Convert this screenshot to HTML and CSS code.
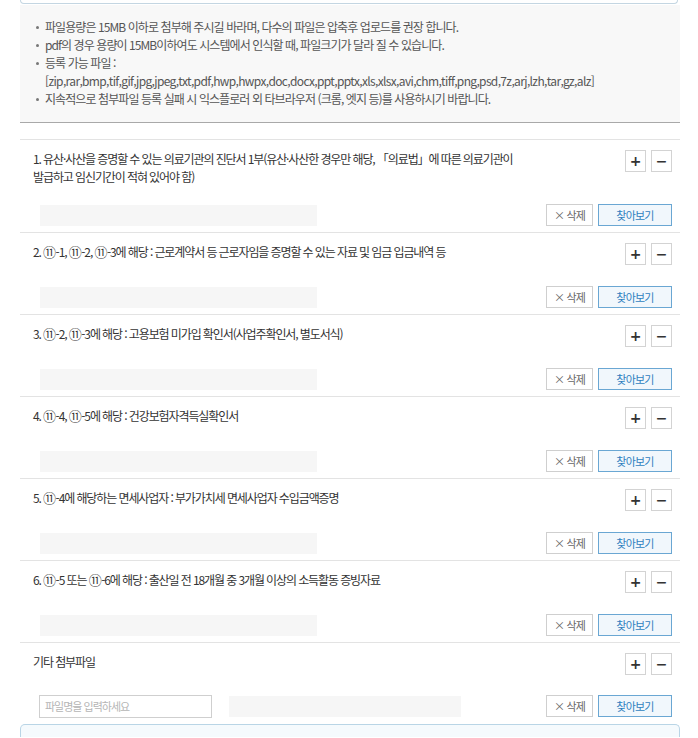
FILE: index.html
```html
<!DOCTYPE html>
<html lang="ko">
  <head>
    <meta charset="UTF-8" />
    <meta name="viewport" content="width=device-width, initial-scale=1.0" />
    <title>첨부파일</title>
    <link rel="stylesheet" href="styles.css">
  </head>
  <body>
    <div class="wrap">
      <div class="top-box"></div>

      <div class="notice">
        <ul>
          <li>파일용량은 15MB 이하로 첨부해 주시길 바라며, 다수의 파일은 압축후 업로드를 권장 합니다.</li>
          <li>pdf의 경우 용량이 15MB이하여도 시스템에서 인식할 때, 파일크기가 달라 질 수 있습니다.</li>
          <li>등록 가능 파일 :<br><span class="ext">[zip,rar,bmp,tif,gif,jpg,jpeg,txt,pdf,hwp,hwpx,doc,docx,ppt,pptx,xls,xlsx,avi,chm,tiff,png,psd,7z,arj,lzh,tar,gz,alz]</span></li>
          <li>지속적으로 첨부파일 등록 실패 시 익스플로러 외 타브라우저 (크롬, 엣지 등)를 사용하시기 바랍니다.</li>
        </ul>
      </div>

      <div class="file-list">
        <div class="file-row">
          <div class="row-head">
            <p class="row-title">1. 유산·사산을 증명할 수 있는 의료기관의 진단서 1부(유산·사산한 경우만 해당, 「의료법」에 따른 의료기관이<br>발급하고 임신기간이 적혀 있어야 함)</p>
            <div class="pm">
              <button type="button" class="pm-btn">+</button>
              <button type="button" class="pm-btn">−</button>
            </div>
          </div>
          <div class="row-file">
            <div class="file-bar"></div>
            <div class="file-btns">
              <button type="button" class="del-btn">× 삭제</button>
              <button type="button" class="find-btn">찾아보기</button>
            </div>
          </div>
        </div>

        <div class="file-row">
          <div class="row-head">
            <p class="row-title">2. <span class="cn">⑪</span>-1, <span class="cn">⑪</span>-2, <span class="cn">⑪</span>-3에 해당 : 근로계약서 등 근로자임을 증명할 수 있는 자료 및 임금 입금내역 등</p>
            <div class="pm">
              <button type="button" class="pm-btn">+</button>
              <button type="button" class="pm-btn">−</button>
            </div>
          </div>
          <div class="row-file">
            <div class="file-bar"></div>
            <div class="file-btns">
              <button type="button" class="del-btn">× 삭제</button>
              <button type="button" class="find-btn">찾아보기</button>
            </div>
          </div>
        </div>

        <div class="file-row">
          <div class="row-head">
            <p class="row-title">3. <span class="cn">⑪</span>-2, <span class="cn">⑪</span>-3에 해당 : 고용보험 미가입 확인서(사업주확인서, 별도서식)</p>
            <div class="pm">
              <button type="button" class="pm-btn">+</button>
              <button type="button" class="pm-btn">−</button>
            </div>
          </div>
          <div class="row-file">
            <div class="file-bar"></div>
            <div class="file-btns">
              <button type="button" class="del-btn">× 삭제</button>
              <button type="button" class="find-btn">찾아보기</button>
            </div>
          </div>
        </div>

        <div class="file-row">
          <div class="row-head">
            <p class="row-title">4. <span class="cn">⑪</span>-4, <span class="cn">⑪</span>-5에 해당 : 건강보험자격득실확인서</p>
            <div class="pm">
              <button type="button" class="pm-btn">+</button>
              <button type="button" class="pm-btn">−</button>
            </div>
          </div>
          <div class="row-file">
            <div class="file-bar"></div>
            <div class="file-btns">
              <button type="button" class="del-btn">× 삭제</button>
              <button type="button" class="find-btn">찾아보기</button>
            </div>
          </div>
        </div>

        <div class="file-row">
          <div class="row-head">
            <p class="row-title">5. <span class="cn">⑪</span>-4에 해당하는 면세사업자 : 부가가치세 면세사업자 수입금액증명</p>
            <div class="pm">
              <button type="button" class="pm-btn">+</button>
              <button type="button" class="pm-btn">−</button>
            </div>
          </div>
          <div class="row-file">
            <div class="file-bar"></div>
            <div class="file-btns">
              <button type="button" class="del-btn">× 삭제</button>
              <button type="button" class="find-btn">찾아보기</button>
            </div>
          </div>
        </div>

        <div class="file-row">
          <div class="row-head">
            <p class="row-title">6. <span class="cn">⑪</span>-5 또는 <span class="cn">⑪</span>-6에 해당 : 출산일 전 18개월 중 3개월 이상의 소득활동 증빙자료</p>
            <div class="pm">
              <button type="button" class="pm-btn">+</button>
              <button type="button" class="pm-btn">−</button>
            </div>
          </div>
          <div class="row-file">
            <div class="file-bar"></div>
            <div class="file-btns">
              <button type="button" class="del-btn">× 삭제</button>
              <button type="button" class="find-btn">찾아보기</button>
            </div>
          </div>
        </div>

        <div class="file-row last">
          <div class="row-head">
            <p class="row-title">기타 첨부파일</p>
            <div class="pm">
              <button type="button" class="pm-btn">+</button>
              <button type="button" class="pm-btn">−</button>
            </div>
          </div>
          <div class="row-file">
            <input type="text" class="file-name" placeholder="파일명을 입력하세요" />
            <div class="file-bar short"></div>
            <div class="file-btns">
              <button type="button" class="del-btn">× 삭제</button>
              <button type="button" class="find-btn">찾아보기</button>
            </div>
          </div>
        </div>
      </div>

      <div class="bottom-box"></div>
    </div>
  </body>
</html>
```

FILE: styles.css
```css
body {
  margin: 0;
  font-family: "Noto Sans CJK KR", "Noto Sans", sans-serif;
  color: #333;
  background: #fff;
}
.wrap {
  width: 660px;
  margin-left: 20px;
}
.top-box {
  height: 3px;
  border: 1px solid #c4d6e2;
  border-top: none;
  border-radius: 0 0 5px 5px;
  margin-right: 2px;
}
.notice {
  margin-top: 1px;
  background: #f8f8f8;
  border-bottom: 1px solid #a9a9a9;
  padding: 13px 0 14px;
}
.notice ul {
  margin: 0;
  padding: 0 0 0 25px;
  list-style: none;
}
.notice li {
  position: relative;
  font-size: 12px;
  line-height: 18px;
  letter-spacing: -0.92px;
  color: #555;
}
.notice li::before {
  content: "";
  position: absolute;
  left: -9px;
  top: 8px;
  width: 3px;
  height: 3px;
  border-radius: 50%;
  background: #777;
}
.notice .ext {
  letter-spacing: -0.65px;
}
.file-list {
  margin-top: 16px;
}
.file-row {
  border-top: 1px solid #e3e3e3;
  padding: 10px 8px 6px 13px;
}
.row-head {
  display: flex;
  justify-content: space-between;
  align-items: flex-start;
  min-height: 25px;
}
.row-title {
  margin: 0;
  font-size: 12px;
  line-height: 18px;
  letter-spacing: -1.1px;
  color: #333;
}
.row-title .cn {
  font-size: 13px;
  letter-spacing: -0.5px;
}
.pm {
  display: flex;
  gap: 5px;
  flex-shrink: 0;
}
.pm-btn {
  width: 21px;
  height: 22px;
  padding: 0;
  border: 1px solid #d3d3d3;
  background: #fff;
  color: #333;
  font-family: "DejaVu Sans", sans-serif;
  font-size: 14px;
  font-weight: bold;
  line-height: 18px;
  cursor: pointer;
}
.row-file {
  display: flex;
  align-items: center;
  margin-top: 18px;
  height: 22px;
}
.file-bar {
  width: 277px;
  height: 21px;
  margin-left: 7px;
  background: #f6f6f6;
}
.file-bar.short {
  width: 232px;
  margin-left: 17px;
}
.file-name {
  width: 173px;
  height: 23px;
  box-sizing: border-box;
  margin: 0 0 0 6px;
  padding: 0 5px;
  border: 1px solid #cfcfcf;
  font-family: inherit;
  font-size: 11px;
  letter-spacing: -1px;
}
.file-name::placeholder {
  color: #b5b5b5;
}
.file-btns {
  display: flex;
  gap: 5px;
  margin-left: auto;
}
.del-btn,
.find-btn {
  height: 22px;
  padding: 0;
  font-family: inherit;
  font-size: 11px;
  letter-spacing: -0.8px;
  cursor: pointer;
}
.del-btn {
  width: 47px;
  border: 1px solid #cfcfcf;
  background: #fff;
  color: #666;
}
.find-btn {
  width: 74px;
  border: 1px solid #6aa7d3;
  background: #f1f7fc;
  color: #2f7fbf;
}
.file-row.last {
  padding-bottom: 6px;
}
.file-row.last .row-file {
  margin-top: 17px;
}
.bottom-box {
  height: 12px;
  margin-top: 1px;
  border: 1px solid #b9d5e6;
  border-bottom: none;
  border-radius: 5px 5px 0 0;
  background: #f5fafd;
}
```
